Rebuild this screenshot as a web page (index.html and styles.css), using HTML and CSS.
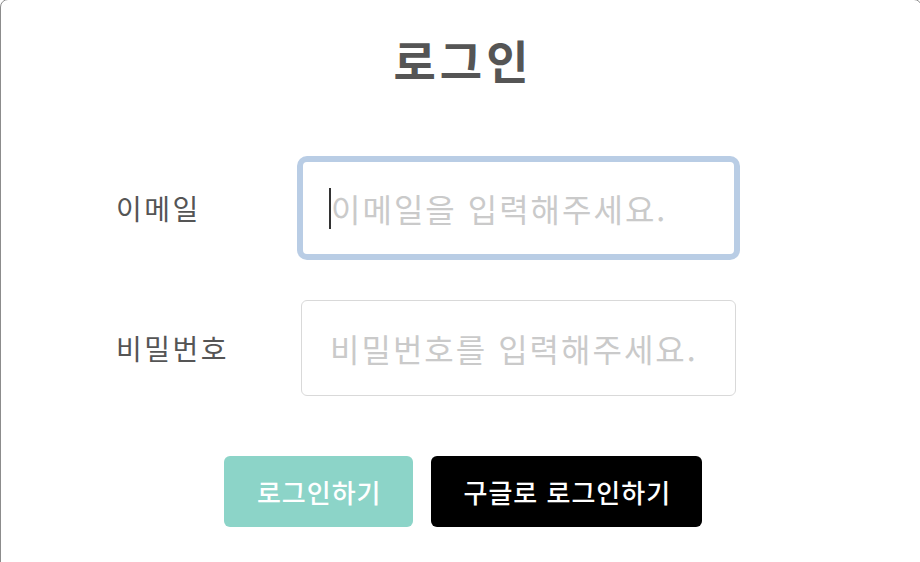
FILE: index.html
```html
<!DOCTYPE html>
<html lang="ko">
<head>
<meta charset="utf-8">
<title>로그인</title>
<link rel="stylesheet" href="styles.css">
</head>
<body>
<div class="modal">
  <h1 class="title">로그인</h1>
  <form class="form">
    <div class="row">
      <label class="label" for="email">이메일</label>
      <span class="field field--focus">
        <input class="input" id="email" type="text" placeholder="이메일을 입력해주세요.">
      </span>
    </div>
    <div class="row">
      <label class="label" for="pw">비밀번호</label>
      <span class="field">
        <input class="input" id="pw" type="password" placeholder="비밀번호를 입력해주세요.">
      </span>
    </div>
    <div class="actions">
      <button type="button" class="btn btn--teal">로그인하기</button>
      <button type="button" class="btn btn--black">구글로 로그인하기</button>
    </div>
  </form>
</div>
</body>
</html>
```
FILE: styles.css
```css
* { box-sizing: border-box; }
html, body { margin: 0; padding: 0; background: #fff; }
body {
  font-family: "Noto Sans CJK KR", "Noto Sans", sans-serif;
  width: 920px;
  height: 562px;
  overflow: hidden;
}
.modal {
  width: 922px;
  height: 580px;
  border: 1px solid #8c8c8c;
  border-radius: 8px;
  margin-top: -1px;
  background: #fff;
}
.title {
  margin: 0;
  padding-top: 27px;
  padding-left: 4px;
  text-align: center;
  font-size: 46px;
  font-weight: 700;
  color: #555;
  line-height: 64px;
  letter-spacing: 4px;
}
.form {
  padding-top: 69px;
}
.row {
  display: flex;
  align-items: center;
  margin-bottom: 44px;
  padding-left: 115px;
}
.label {
  width: 185px;
  font-size: 28px;
  letter-spacing: 2.5px;
  color: #555;
}
.field {
  position: relative;
  display: block;
}
.input {
  display: block;
  width: 435px;
  height: 96px;
  border: 1px solid #d9d9d9;
  border-radius: 6px;
  padding: 0 0 0 28px;
  font-family: inherit;
  font-size: 32px;
  letter-spacing: 2px;
  color: #333;
  outline: none;
  background: #fff;
}
.input::placeholder { color: #cacaca; }
.field--focus .input {
  border: 2px solid #b9cde5;
  box-shadow: 0 0 0 4px #b9cde5;
}
.field--focus::after {
  content: "";
  position: absolute;
  left: 28px;
  top: 28px;
  width: 2px;
  height: 41px;
  background: #333;
}
.actions {
  display: flex;
  justify-content: center;
  gap: 18px;
  padding-left: 4px;
  margin-top: 60px;
}
.btn {
  height: 71px;
  border: none;
  border-radius: 6px;
  padding: 0 32px 0 33px;
  font-family: inherit;
  font-size: 26px;
  letter-spacing: 1px;
  font-weight: 500;
  color: #fff;
}
.btn--teal { background: #8cd4c8; }
.btn--black { background: #000; padding: 0 31px 0 32px; }
```
